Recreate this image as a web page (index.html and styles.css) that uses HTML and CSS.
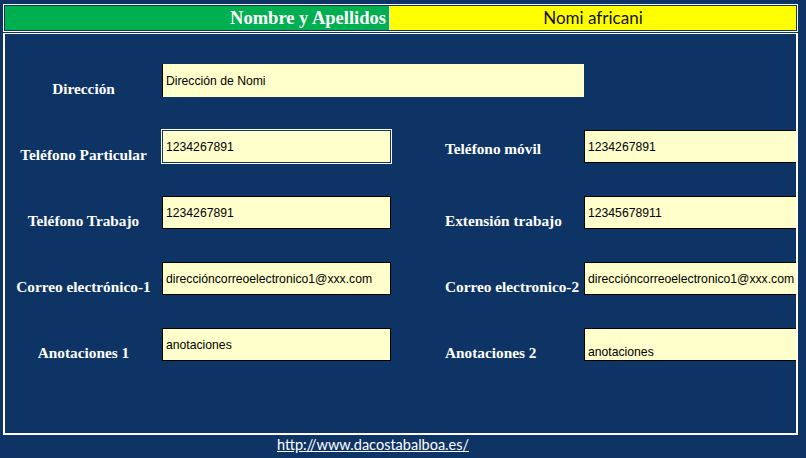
FILE: index.html
```html
<!DOCTYPE html>
<html lang="es">
<head>
    <meta charset="UTF-8">
    <title>Nomi africani</title>
    <link rel="stylesheet" href="styles.css">
</head>
<body>

    <div class="sheet">
        <!-- Cabecera -->
        <div class="title-bar">
            <div class="title-label">Nombre y Apellidos</div>
            <div class="title-value">Nomi africani</div>
        </div>

        <!-- Ficha -->
        <div class="panel">
            <div class="form-grid">
                <div class="label">Dirección</div>
                <div class="field field-wide">Dirección de Nomi</div>

                <div class="label">Teléfono Particular</div>
                <div class="field field-active">1234267891</div>
                <div class="label label-right label-high">Teléfono móvil</div>
                <div class="field field-right">1234267891</div>

                <div class="label">Teléfono Trabajo</div>
                <div class="field">1234267891</div>
                <div class="label label-right">Extensión trabajo</div>
                <div class="field field-right">12345678911</div>

                <div class="label">Correo electrónico-1</div>
                <div class="field">direccióncorreoelectronico1@xxx.com</div>
                <div class="label label-right">Correo electronico-2</div>
                <div class="field field-right">direccióncorreoelectronico1@xxx.com</div>

                <div class="label">Anotaciones 1</div>
                <div class="field">anotaciones</div>
                <div class="label label-right">Anotaciones 2</div>
                <div class="field field-right field-bottom">anotaciones</div>
            </div>
        </div>

        <div class="footer">
            <a href="http://www.dacostabalboa.es/">http://www.dacostabalboa.es/</a>
        </div>
    </div>

</body>
</html>
```

FILE: styles.css
```css
/* Reset */
* {
    margin: 0;
    padding: 0;
    box-sizing: border-box;
}

body {
    background-color: #0e3466;
    font-family: "Liberation Serif", "Times New Roman", serif;
    width: 806px;
    height: 458px;
    overflow: hidden;
}

.sheet {
    padding: 4px 0 0 3px;
}

/* Cabecera */
.title-bar {
    width: 795px;
    height: 28px;
    border: 1px solid white;
    padding: 1px;
    display: flex;
}

.title-label {
    width: 385px;
    background-color: #00b050;
    border-right: 1px solid white;
    color: white;
    font-weight: bold;
    font-size: 18.5px;
    text-align: right;
    padding-right: 3px;
    line-height: 24px;
}

.title-value {
    flex: 1;
    background-color: #ffff00;
    color: #111;
    font-family: Lato, "Open Sans", sans-serif;
    font-size: 17px;
    text-align: center;
    line-height: 24px;
}

/* Ficha */
.panel {
    width: 795px;
    height: 402px;
    margin-top: 1px;
    border: 2px solid white;
    border-top-width: 1px;
    padding-top: 30px;
    overflow: hidden;
}

.form-grid {
    display: grid;
    grid-template-columns: 157px 229px 54px 139px 1fr;
    grid-auto-rows: 33px;
    row-gap: 33px;
}

.label {
    grid-column: 1;
    align-self: end;
    text-align: center;
    color: white;
    font-weight: bold;
    font-size: 15.3px;
    line-height: 17px;
    padding-bottom: 0;
    white-space: nowrap;
}

.label-right {
    grid-column: 4;
    text-align: left;
}

.label-high {
    padding-bottom: 6px;
}

.field {
    grid-column: 2;
    background-color: #ffffcc;
    border: 1px solid #000;
    color: #000;
    font-family: "Liberation Sans", Arial, sans-serif;
    font-size: 12.2px;
    padding-left: 3px;
    display: flex;
    align-items: center;
    white-space: nowrap;
    overflow: hidden;
}

.field-wide {
    grid-column: 2 / 5;
    border: none;
    border-left: 1px solid #000;
}

.field-active {
    border: 1px solid #0e3466;
    outline: 1px solid white;
}

.field-right {
    grid-column: 5;
    border-right: none;
}

.field-bottom {
    align-items: flex-end;
    padding-bottom: 1px;
}

/* Pie */
.footer {
    padding: 1px 0 0 274px;
    font-family: Lato, "Open Sans", sans-serif;
    font-size: 14.5px;
    line-height: 18px;
}

.footer a {
    color: white;
}
```
